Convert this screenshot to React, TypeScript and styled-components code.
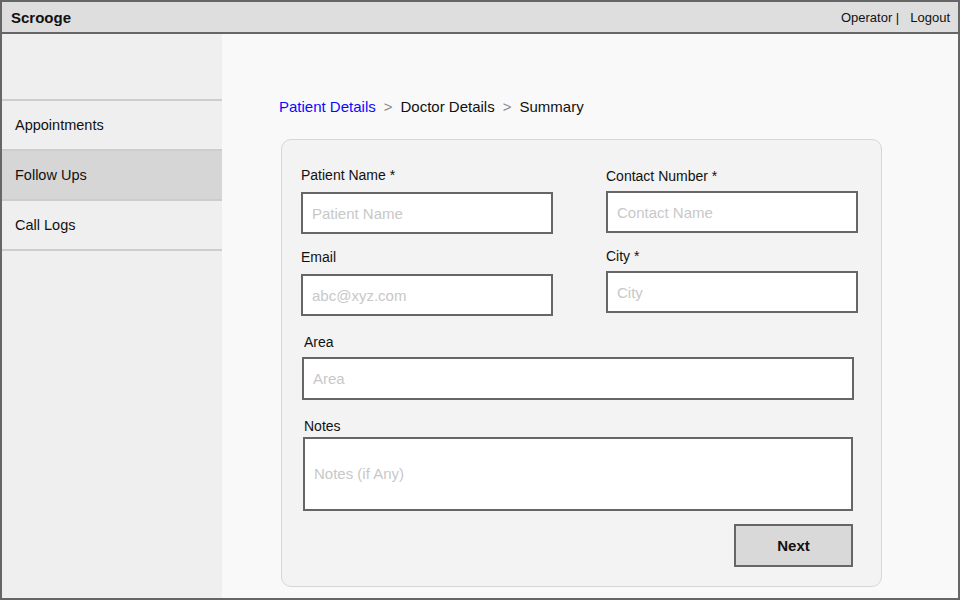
import React from "react";
import styled, { createGlobalStyle } from "styled-components";

const Global = createGlobalStyle`
  html, body { margin: 0; padding: 0; background: #fff; }
  * { box-sizing: border-box; }
`;

const hand = `"Liberation Sans", Arial, sans-serif`;
const sans = `"Liberation Sans", Arial, sans-serif`;

const Frame = styled.div`
  width: 960px;
  height: 600px;
  border: 2px solid #666;
  display: flex;
  flex-direction: column;
  background: #f9f9f9;
  overflow: hidden;
`;

const Header = styled.header`
  height: 32px;
  flex: none;
  background: #dedede;
  border-bottom: 2px solid #666;
  display: flex;
  align-items: center;
  justify-content: space-between;
  padding: 0 8px 0 9px;
`;

const Brand = styled.div`
  font-family: ${sans};
  font-weight: bold;
  font-size: 15px;
  color: #111;
`;

const UserNav = styled.div`
  font-family: ${hand};
  font-size: 13px;
  color: #111;
  display: flex;
  gap: 11px;
`;

const Body = styled.div`
  flex: 1;
  display: flex;
  min-height: 0;
`;

const Sidebar = styled.nav`
  width: 220px;
  flex: none;
  background: #efefef;
  padding-top: 65px;
  display: flex;
  flex-direction: column;
`;

const NavItem = styled.div<{ $active?: boolean; $last?: boolean }>`
  height: 50px;
  border-top: 2px solid #cdcdcd;
  ${(p) => (p.$last ? "border-bottom: 2px solid #cdcdcd; height: 52px;" : "")}
  background: ${(p) => (p.$active ? "#d6d6d6" : "#efefef")};
  display: flex;
  align-items: center;
  padding-left: 13px;
  font-family: ${hand};
  font-size: 14.5px;
  color: #111;
`;

const Main = styled.main`
  flex: 1;
  padding: 62px 0 0 57px;
  display: flex;
  flex-direction: column;
`;

const Crumbs = styled.div`
  font-family: ${sans};
  font-size: 15px;
  display: flex;
  align-items: center;
  height: 20px;
  gap: 8px;
  color: #111;
`;

const Crumb = styled.span<{ $current?: boolean }>`
  color: ${(p) => (p.$current ? "#0a0aff" : "#111")};
`;

const Sep = styled.span`
  color: #888;
`;

const Card = styled.section`
  margin: 23px 0 0 2px;
  width: 601px;
  height: 448px;
  background: #f3f3f3;
  border: 1px solid #d6d6d6;
  border-radius: 10px;
  padding: 26px 23px 0 19px;
  display: flex;
  flex-direction: column;
`;

const TwoCol = styled.div`
  display: grid;
  grid-template-columns: 252px 252px;
  column-gap: 53px;
`;

const Column = styled.div<{ $shift?: number }>`
  display: flex;
  flex-direction: column;
  margin-top: ${(p) => p.$shift ?? 0}px;
`;

const Label = styled.label<{ $gap?: number; $top?: number; $indent?: number }>`
  font-family: ${hand};
  font-size: 14px;
  line-height: 18px;
  height: 18px;
  color: #111;
  margin-top: ${(p) => p.$top ?? 0}px;
  margin-bottom: ${(p) => p.$gap ?? 8}px;
  padding-left: ${(p) => p.$indent ?? 0}px;
`;

const Field = styled.input<{ $w?: number; $h?: number; $indent?: number }>`
  display: block;
  width: ${(p) => p.$w ?? 252}px;
  height: ${(p) => p.$h ?? 42}px;
  margin-left: ${(p) => p.$indent ?? 0}px;
  border: 2px solid #666;
  background: #fff;
  padding: 0 9px;
  font-family: ${sans};
  font-size: 15px;
  color: #333;
  outline: none;
  &::placeholder { color: #c8c8c8; }
`;

const Notes = styled.textarea`
  display: block;
  width: 550px;
  height: 74px;
  margin-left: 2px;
  border: 2px solid #666;
  background: #fff;
  padding: 26px 9px 0;
  font-family: ${sans};
  font-size: 15px;
  line-height: 18px;
  resize: none;
  outline: none;
  &::placeholder { color: #c8c8c8; }
`;

const Actions = styled.div`
  display: flex;
  justify-content: flex-end;
  padding-right: 5px;
  margin-top: 13px;
`;

const NextButton = styled.button`
  width: 119px;
  height: 43px;
  background: #d9d9d9;
  border: 2px solid #666;
  font-family: ${sans};
  font-weight: bold;
  font-size: 15px;
  color: #111;
  padding: 0;
`;

export default function App() {
  return (
    <>
      <Global />
      <Frame>
        <Header>
          <Brand>Scrooge</Brand>
          <UserNav>
            <span>Operator |</span>
            <span>Logout</span>
          </UserNav>
        </Header>
        <Body>
          <Sidebar>
            <NavItem>Appointments</NavItem>
            <NavItem $active>Follow Ups</NavItem>
            <NavItem $last>Call Logs</NavItem>
          </Sidebar>
          <Main>
            <Crumbs>
              <Crumb $current>Patient Details</Crumb>
              <Sep>&gt;</Sep>
              <Crumb>Doctor Details</Crumb>
              <Sep>&gt;</Sep>
              <Crumb>Summary</Crumb>
            </Crumbs>
            <Card>
              <TwoCol>
                <Column>
                  <Label>Patient Name *</Label>
                  <Field placeholder="Patient Name" />
                  <Label $top={14}>Email</Label>
                  <Field placeholder="abc@xyz.com" />
                </Column>
                <Column $shift={1}>
                  <Label $gap={6}>Contact Number *</Label>
                  <Field placeholder="Contact Name" />
                  <Label $top={14} $gap={6}>City *</Label>
                  <Field placeholder="City" />
                </Column>
              </TwoCol>
              <Label $top={17} $gap={6} $indent={3}>Area</Label>
              <Field $w={552} $h={43} $indent={1} placeholder="Area" />
              <Label $top={17} $gap={2} $indent={3}>Notes</Label>
              <Notes placeholder="Notes (if Any)" />
              <Actions>
                <NextButton>Next</NextButton>
              </Actions>
            </Card>
          </Main>
        </Body>
      </Frame>
    </>
  );
}
